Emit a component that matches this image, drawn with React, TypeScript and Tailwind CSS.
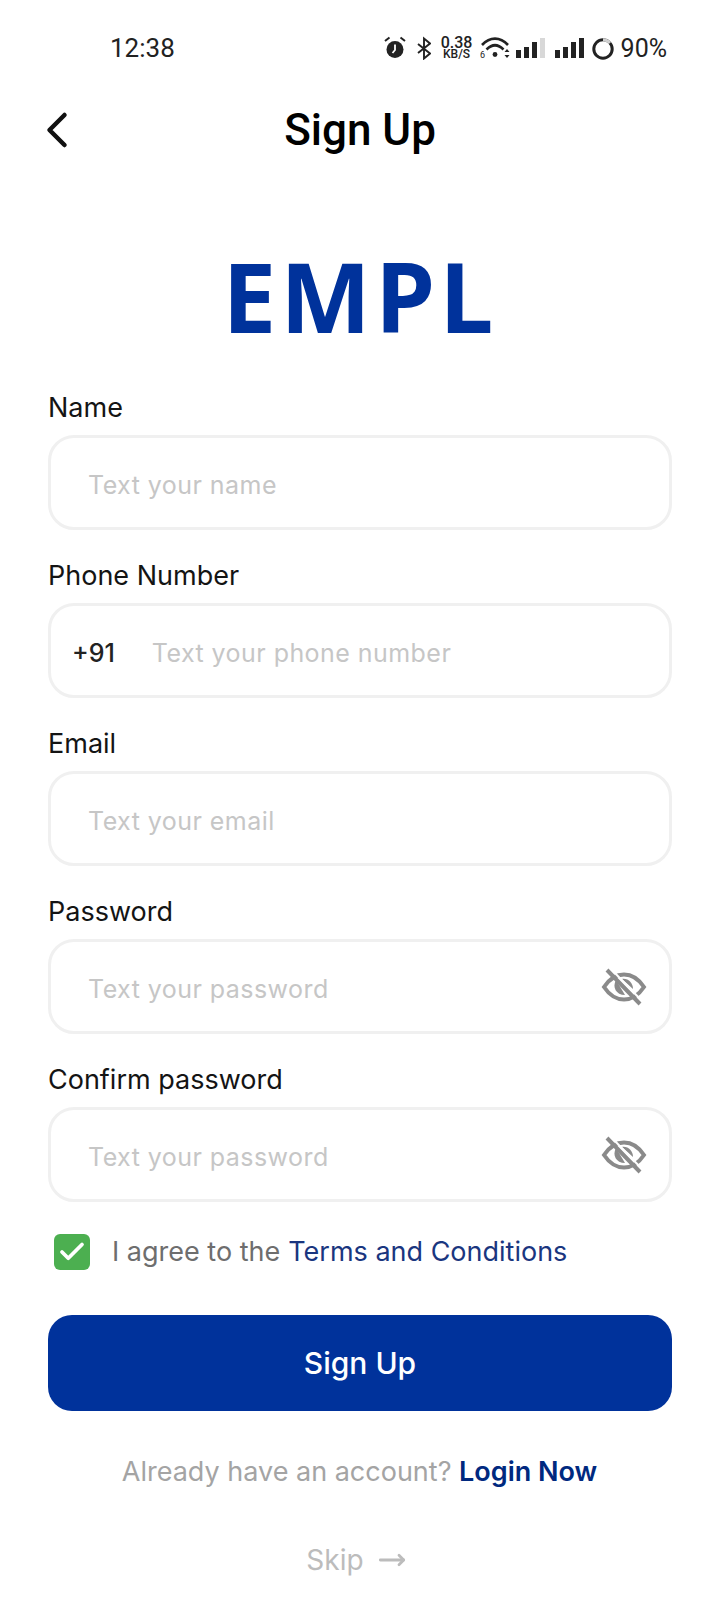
import { ChevronLeft, MoveRight, Check } from "lucide-react"

// Slashed eye drawn by hand, the filled iris is what lucide's version lacks
function EyeOff() {
  return (
    <svg width="46" height="40" viewBox="0 0 46 40" fill="none" className="shrink-0">
      <path d="M3 20 C9 11 15 7.5 23 7.5 C31 7.5 37 11 43 20 C37 29 31 32.5 23 32.5 C15 32.5 9 29 3 20 Z" stroke="#8a8a8a" strokeWidth="4" />
      <path d="M15 13 C11 20 15 28 24 28 Z" fill="#8a8a8a" />
      <path d="M21 12 C27 11 32 16 32 22 Z" fill="#8a8a8a" />
      <path d="M6 3 L39 37" stroke="#8a8a8a" strokeWidth="4" />
      <path d="M10 2 L43 36" stroke="#fff" strokeWidth="2" />
    </svg>
  )
}

function Alarm() {
  return (
    <svg width="22" height="24" viewBox="0 0 22 24" className="shrink-0">
      <circle cx="11" cy="13.5" r="8.5" fill="#222" />
      <path d="M1 5 L5.5 1.5 M21 5 L16.5 1.5" stroke="#222" strokeWidth="2" />
      <path d="M11 8.5 V14 L8.5 17" stroke="#fff" strokeWidth="1.8" fill="none" />
    </svg>
  )
}

function Bluetooth() {
  return (
    <svg width="14" height="24" viewBox="0 0 14 24" fill="none" className="ml-[11px] shrink-0">
      <path d="M1 8 L13 17.5 L7 22.5 V2.5 L13 7.5 L1 17" stroke="#222" strokeWidth="1.9" />
    </svg>
  )
}

function Wifi() {
  return (
    <svg width="30" height="24" viewBox="0 0 30 24" fill="none" className="ml-[7px] shrink-0">
      <path d="M2 9 C10 0.5 20 0.5 28 9" stroke="#222" strokeWidth="2.6" />
      <path d="M6.5 13.5 C12 8 18 8 23.5 13.5" stroke="#222" strokeWidth="2.6" />
      <circle cx="15" cy="18.5" r="2.4" fill="#222" />
      <path d="M24.5 16 L27 13 L29.5 16 Z M24.5 19 L27 22 L29.5 19 Z" fill="#222" />
      <text x="0" y="22" fontSize="9" fill="#222" fontFamily="Roboto, sans-serif">6</text>
    </svg>
  )
}

function Signal({ faded, className }: { faded?: boolean; className?: string }) {
  return (
    <svg width="29" height="24" viewBox="0 0 29 24" className={`shrink-0 ${className ?? ""}`}>
      <rect x="0" y="14" width="5" height="8" fill="#222" />
      <rect x="8" y="11" width="5" height="11" fill="#222" />
      <rect x="16" y="6" width="5" height="16" fill="#222" />
      <rect x="24" y="2" width="5" height="20" fill={faded ? "#d8d8d8" : "#222"} />
    </svg>
  )
}

function BatteryRing() {
  return (
    <svg width="22" height="24" viewBox="0 0 22 24" fill="none" className="ml-[8px] shrink-0">
      <circle cx="11" cy="13" r="9.2" stroke="#222" strokeWidth="3" />
      <path d="M11 3.8 A9.2 9.2 0 0 1 18 7" stroke="#cfcfcf" strokeWidth="3" />
    </svg>
  )
}

function StatusBar() {
  return (
    <div className="flex h-[48px] items-center justify-between pl-[110px] pr-[53px] font-['Roboto',sans-serif] text-[#222]">
      <span className="text-[26px] leading-none">12:38</span>
      <div className="flex items-center">
        <Alarm />
        <Bluetooth />
        <div className="ml-[10px] flex w-[32px] flex-col items-center font-medium">
          <span className="text-[16px] leading-[12px]">0.38</span>
          <span className="text-[12px] leading-[11px]">KB/S</span>
        </div>
        <Wifi />
        <Signal faded className="ml-[6px]" />
        <Signal className="ml-[10px]" />
        <BatteryRing />
        <span className="ml-[7px] text-[25px] leading-none">90%</span>
      </div>
    </div>
  )
}

function Field({ label, placeholder, prefix, eye }: { label: string; placeholder: string; prefix?: string; eye?: boolean }) {
  return (
    <div className="flex flex-col">
      <label className="h-[34px] pt-[1px] text-[27px] leading-[34px] text-[#141414]">{label}</label>
      <div className={`mt-[11px] flex h-[95px] items-center rounded-[26px] border-[3px] border-[#f0f0f0] ${prefix ? "pl-[21px]" : "pl-[37px]"} pr-[22px]`}>
        {prefix && <span className="mr-[37px] pt-[6px] text-[25px] font-medium text-[#222]">{prefix}</span>}
        <span className="flex-1 pt-[6px] text-[25px] tracking-[0.45px] text-[#c6c6c6]">{placeholder}</span>
        {eye && <EyeOff />}
      </div>
    </div>
  )
}

export default function App() {
  return (
    <div className="h-[1600px] w-[720px] overflow-hidden bg-white pt-[24px] font-['Inter',sans-serif]">
      <StatusBar />
      <header className="relative mt-[33px] flex h-[50px] items-center justify-center">
        <ChevronLeft className="absolute left-[27px] top-1/2 -translate-y-1/2" size={60} strokeWidth={1.8} color="#111" />
        <h1 className="font-['Roboto',sans-serif] text-[44px] font-medium leading-none text-black">Sign Up</h1>
      </header>
      <div className="mt-[91px] flex h-[100px] items-center justify-center">
        <span className="font-['Open_Sans',sans-serif] text-[96px] font-bold leading-none tracking-[4px] text-[#00329b]">EMPL</span>
      </div>
      <form className="mx-[48px] mt-[44px] flex flex-col gap-[28px]">
        <Field label="Name" placeholder="Text your name" />
        <Field label="Phone Number" placeholder="Text your phone number" prefix="+91" />
        <Field label="Email" placeholder="Text your email" />
        <Field label="Password" placeholder="Text your password" eye />
        <Field label="Confirm password" placeholder="Text your password" eye />
        <div className="mt-[2px] flex h-[40px] items-center pl-[6px] text-[27px]">
          <span className="flex h-[36px] w-[36px] items-center justify-center rounded-[6px] bg-[#4caf50]">
            <Check size={30} strokeWidth={3} color="#fff" />
          </span>
          <span className="ml-[22px] text-[#6e6e6e]">I agree to the</span>
          <span className="ml-[8px] text-[#1a367f]">Terms and Conditions</span>
        </div>
        <button type="button" className="mt-[15px] h-[96px] rounded-[24px] bg-[#00329b] text-[30px] font-medium text-white">Sign Up</button>
      </form>
      <p className="mt-[41px] pr-[1px] text-center text-[27px] leading-[40px] text-[#a4a4a4]">
        Already have an account? <span className="font-semibold text-[#00297f]">Login Now</span>
      </p>
      <div className="mt-[48px] flex items-center justify-center gap-[14px] pr-[8px] text-[28px] leading-[40px] text-[#bcbcbc]">
        <span>Skip</span>
        <MoveRight size={28} strokeWidth={2.4} color="#bcbcbc" />
      </div>
    </div>
  )
}
